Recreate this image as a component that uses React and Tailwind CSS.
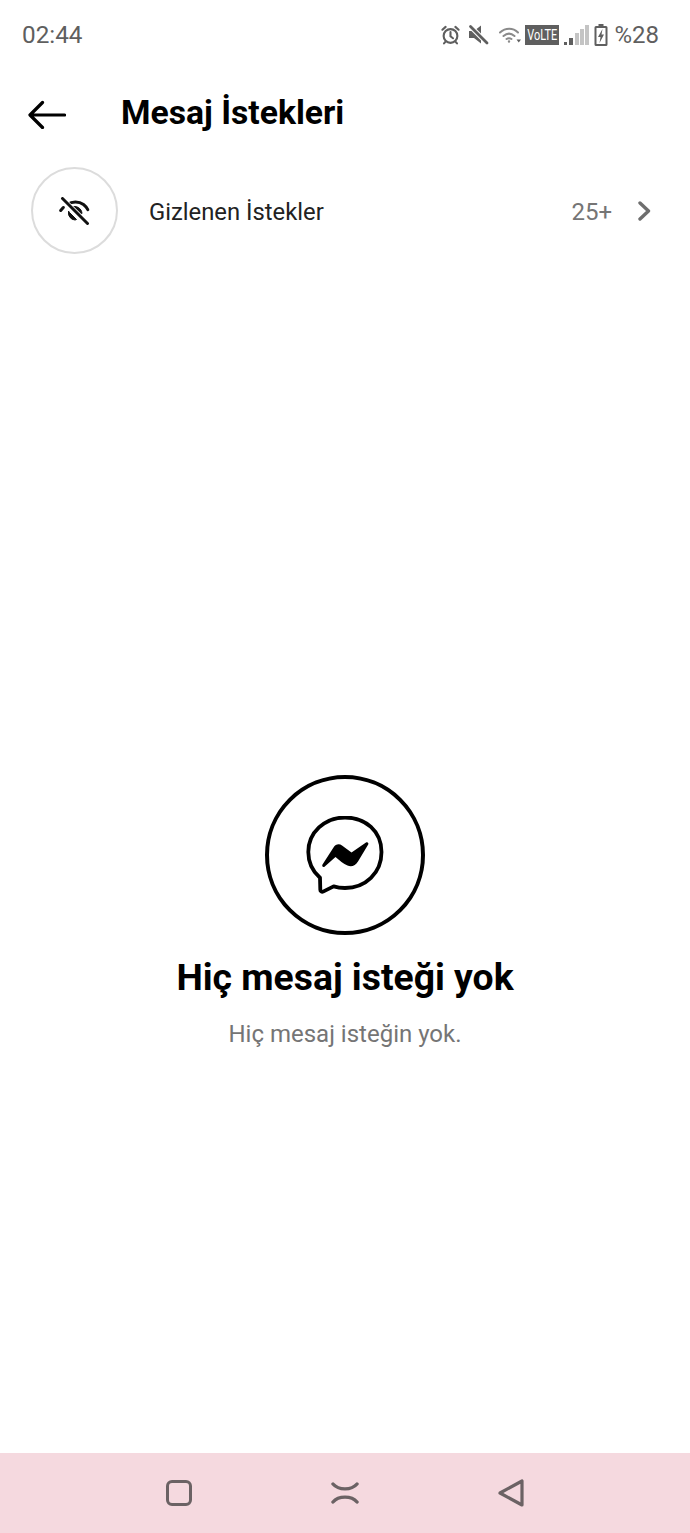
import React from 'react';

function StatusIcons() {
  return (
    <div className="flex items-center text-[#5f5f5f]">
      {/* alarm */}
      <svg width="21" height="22" viewBox="0 0 22 22" fill="none" stroke="#5f5f5f" strokeWidth="2.200" strokeLinecap="round">
        <circle cx="11" cy="12" r="7.2" />
        <path d="M11 8v4.4l2.6 2M2.500 5.500l3.400-3M19.500 5.500l-3.400-3M5.600 18.200l-1.400 1.600M16.400 18.200l1.400 1.600" />
      </svg>
      {/* mute */}
      <svg className="ml-[7px]" width="21" height="22" viewBox="0 0 21 22">
        <path d="M1 7h5L13 1.500v18L6 14H1z" fill="#5f5f5f" />
        <path d="M2 2l18 18" stroke="#ffffff" strokeWidth="5" />
        <path d="M2.500 2.500l16.500 16.500" stroke="#5f5f5f" strokeWidth="2.800" strokeLinecap="round" />
      </svg>
      {/* wifi */}
      <svg className="ml-[9px]" width="24" height="20" viewBox="0 0 24 20" fill="none" stroke="#8a8a8a" strokeWidth="2" strokeLinecap="round">
        <path d="M2 7.500c5.500-5 13-5 18 0M5.500 11c3.500-3 7.500-3 11 0M8.500 14c1.500-1 3.500-1 5 0" />
        <circle cx="11" cy="16.500" r="1.200" fill="#8a8a8a" stroke="none" />
        <path d="M18.500 14.500h4.500l-2.250 3z" fill="#5f5f5f" stroke="none" />
      </svg>
      {/* volte */}
      <div className="ml-[3px] flex h-[20px] w-[34px] items-center justify-center bg-[#5f5f5f] text-white">
        <span className="scale-x-[0.78] text-[14px] leading-none">VoLTE</span>
      </div>
      {/* signal */}
      <svg className="ml-[5px]" width="25" height="22" viewBox="0 0 25 22">
        <rect x="0" y="18" width="3" height="3" fill="#5f5f5f" />
        <rect x="5" y="14" width="4" height="7" fill="#5f5f5f" />
        <rect x="11" y="9" width="4" height="12" fill="#c4c4c4" />
        <rect x="16" y="5" width="4" height="16" fill="#c4c4c4" />
        <rect x="21" y="1" width="4" height="20" fill="#c4c4c4" />
      </svg>
      {/* battery */}
      <svg className="ml-[5px]" width="14" height="24" viewBox="0 0 14 24">
        <path d="M4.500 1h5v2h2.500a1.500 1.500 0 0 1 1.500 1.500v17a1.500 1.500 0 0 1-1.500 1.500H2a1.500 1.500 0 0 1-1.500-1.500v-17A1.500 1.500 0 0 1 2 3h2.500z" fill="#5f5f5f" />
        <rect x="2.500" y="5" width="9" height="16" fill="#ffffff" />
        <path d="M8.500 6L4 14h2.500l-1 6L10 11.500H7.500z" fill="#5f5f5f" />
      </svg>
      <span className="ml-[6px] text-[24px] leading-none text-[#5f5f5f]">%28</span>
    </div>
  );
}

function HiddenIcon() {
  return (
    <svg width="32" height="28" viewBox="0 0 32 28" fill="none" stroke="#111111" strokeLinecap="round">
      <path d="M8.500 7.500C13 4 20 4 24.500 7.500c1.700 1.300 3.300 3.200 4.300 5.200" strokeWidth="3" />
      <path d="M1.700 13.500l2.600-3" strokeWidth="3" />
      <path d="M9.500 14.500a7 7 0 0 0 6.500 8.500l1.500-.5-7-7z" fill="#111111" strokeWidth="1" />
      <path d="M12.500 10a7.500 7.500 0 0 1 10.500 6.500l-2 1z" fill="#111111" strokeWidth="1" />
      <path d="M3 1.500l25.500 25" stroke="#ffffff" strokeWidth="5" />
      <path d="M3.500 1.500l25 25" strokeWidth="3" />
    </svg>
  );
}

function MessengerIcon() {
  return (
    <svg width="78" height="78" viewBox="0 0 78 78" fill="none">
      <path
        d="M39 1.500C18.500 1.500 2.300 16.500 2.300 36c0 10.500 4.500 19.500 11.700 25.800l.3 12c0 1.500 1.500 2.400 2.800 1.800l10.500-5.200c3.600 1.100 7.400 1.600 11.400 1.600 20.500 0 36.500-15 36.500-36S59.500 1.500 39 1.500z"
        stroke="#000000"
        strokeWidth="3.800"
        strokeLinejoin="round"
      />
      <path
        d="M16.500 48.500 27.500 31.500C29.500 28.300 33 27.300 36 29.500L45.500 36.500 60 26.500C61.500 25.600 63 27 62.200 28.500L52 45.500C49.500 49.800 45.500 51.300 41.500 49.600 37.500 48 33.500 44.500 29.500 41L18.500 50.700C17 51.700 15.600 50 16.500 48.500z"
        fill="#000000"
      />
    </svg>
  );
}

export default function App() {
  return (
    <div className="flex h-[1533px] w-[690px] flex-col bg-white font-['Roboto',sans-serif]">
      {/* status bar */}
      <div className="flex h-[70px] items-center justify-between pl-[22px] pr-[31px]">
        <span className="text-[24.300px] leading-none text-[#5f5f5f]">02:44</span>
        <StatusIcons />
      </div>

      {/* header */}
      <div className="flex h-[86px] items-center pl-[28px]">
        <svg className="mt-[2px]" width="38" height="30" viewBox="0 0 38 30" fill="none" stroke="#000000" strokeWidth="3.200" strokeLinecap="round" strokeLinejoin="round">
          <path d="M36.500 16H2.500M14.500 3.500L2 16 14.500 28.500" />
        </svg>
        <h1 className="ml-[55px] text-[33.700px] font-bold leading-none text-black">Mesaj İstekleri</h1>
      </div>

      {/* hidden requests row */}
      <div className="mt-[11px] flex items-center pl-[31px] pr-[39px]">
        <div className="flex h-[87px] w-[87px] items-center justify-center rounded-full border-2 border-[#dcdcdc]">
          <HiddenIcon />
        </div>
        <span className="ml-[31px] flex-1 pt-[4px] text-[23.800px] text-[#222222]">Gizlenen İstekler</span>
        <span className="pt-[3px] text-[24px] text-[#757575]">25+</span>
        <svg className="ml-[25px]" width="14" height="20" viewBox="0 0 14 20" fill="none" stroke="#6e6e6e" strokeWidth="3.400" strokeLinecap="round" strokeLinejoin="round">
          <path d="M3 2l8.500 8L3 18" />
        </svg>
      </div>

      {/* empty state */}
      <div className="flex flex-1 flex-col items-center pt-[521px]">
        <div className="flex h-[160px] w-[160px] items-center justify-center rounded-full border-[4px] border-black">
          <MessengerIcon />
        </div>
        <h2 className="mt-[21px] text-[37.300px] font-bold leading-[42px] text-black">Hiç mesaj isteği yok</h2>
        <p className="mt-[22px] text-[24px] leading-[28px] text-[#757575]">Hiç mesaj isteğin yok.</p>
      </div>

      {/* nav bar */}
      <div className="flex h-[80px] items-center justify-between bg-[#f5d9df] px-[166px]">
        <div className="h-[26px] w-[26px] rounded-[6px] border-[3px] border-[#6b6264]" />
        <svg width="28" height="24" viewBox="0 0 28 24" fill="none" stroke="#6b6264" strokeWidth="3.400" strokeLinecap="round">
          <path d="M2 3c5.500 6.500 18.500 6.500 24 0M2 21c5.500-6.500 18.500-6.500 24 0" />
        </svg>
        <svg width="26" height="28" viewBox="0 0 26 28" fill="none" stroke="#6b6264" strokeWidth="3.200" strokeLinejoin="round">
          <path d="M24 2v24L2 14z" />
        </svg>
      </div>
    </div>
  );
}
